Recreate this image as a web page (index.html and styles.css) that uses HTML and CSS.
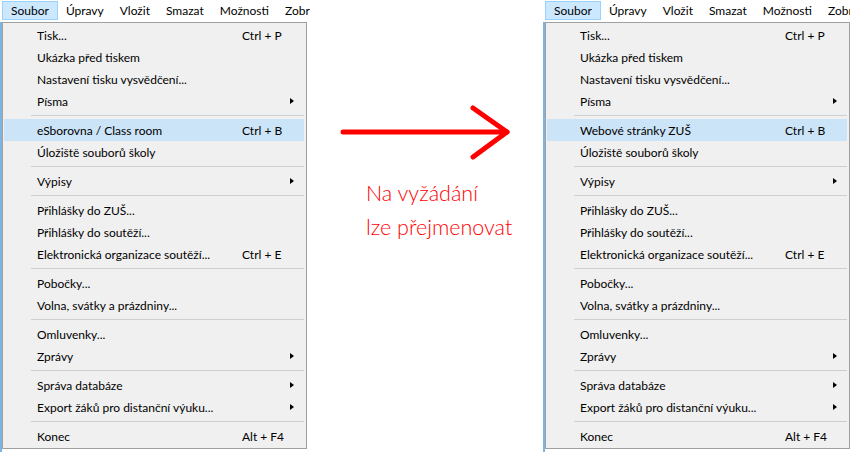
FILE: index.html
```html
<!DOCTYPE html>
<html lang="cs">
<head>
    <meta charset="UTF-8">
    <meta name="viewport" content="width=device-width, initial-scale=1.0">
    <title>Menu Soubor</title>
    <link rel="stylesheet" href="styles.css">
</head>
<body>
    <div class="page">
        <!-- Before -->
        <div class="panel">
            <div class="menubar">
                <span class="bar-item active">Soubor</span>
                <span class="bar-item">Úpravy</span>
                <span class="bar-item">Vložit</span>
                <span class="bar-item">Smazat</span>
                <span class="bar-item">Možnosti</span>
                <span class="bar-item">Zobrazit</span>
            </div>
            <div class="frame">
                <div class="dropdown">
                    <div class="item"><span class="label">Tisk...</span><span class="key">Ctrl + P</span><span class="sub"></span></div>
                    <div class="item"><span class="label">Ukázka před tiskem</span><span class="key"></span><span class="sub"></span></div>
                    <div class="item"><span class="label">Nastavení tisku vysvědčení...</span><span class="key"></span><span class="sub"></span></div>
                    <div class="item"><span class="label">Písma</span><span class="key"></span><span class="sub arrow"></span></div>
                    <div class="sep"></div>
                    <div class="item selected"><span class="label">eSborovna / Class room</span><span class="key">Ctrl + B</span><span class="sub"></span></div>
                    <div class="item"><span class="label">Úložiště souborů školy</span><span class="key"></span><span class="sub"></span></div>
                    <div class="sep"></div>
                    <div class="item"><span class="label">Výpisy</span><span class="key"></span><span class="sub arrow"></span></div>
                    <div class="sep"></div>
                    <div class="item"><span class="label">Přihlášky do ZUŠ...</span><span class="key"></span><span class="sub"></span></div>
                    <div class="item"><span class="label">Přihlášky do soutěží...</span><span class="key"></span><span class="sub"></span></div>
                    <div class="item"><span class="label">Elektronická organizace soutěží...</span><span class="key">Ctrl + E</span><span class="sub"></span></div>
                    <div class="sep"></div>
                    <div class="item"><span class="label">Pobočky...</span><span class="key"></span><span class="sub"></span></div>
                    <div class="item"><span class="label">Volna, svátky a prázdniny...</span><span class="key"></span><span class="sub"></span></div>
                    <div class="sep"></div>
                    <div class="item"><span class="label">Omluvenky...</span><span class="key"></span><span class="sub"></span></div>
                    <div class="item"><span class="label">Zprávy</span><span class="key"></span><span class="sub arrow"></span></div>
                    <div class="sep"></div>
                    <div class="item"><span class="label">Správa databáze</span><span class="key"></span><span class="sub arrow"></span></div>
                    <div class="item"><span class="label">Export žáků pro distanční výuku...</span><span class="key"></span><span class="sub arrow"></span></div>
                    <div class="sep"></div>
                    <div class="item"><span class="label">Konec</span><span class="key">Alt + F4</span><span class="sub"></span></div>
                </div>
            </div>
        </div>

        <!-- Arrow + note -->
        <div class="middle">
            <svg class="big-arrow" width="180" height="60" viewBox="0 0 180 60">
                <line x1="3" y1="30" x2="167" y2="30" stroke="#ff0000" stroke-width="5" stroke-linecap="round"/>
                <polyline points="133,6 167,30 133,55" fill="none" stroke="#ff0000" stroke-width="5" stroke-linecap="round" stroke-linejoin="round"/>
            </svg>
            <p class="note">Na vyžádání<br>lze přejmenovat</p>
        </div>

        <!-- After -->
        <div class="panel last">
            <div class="menubar">
                <span class="bar-item active">Soubor</span>
                <span class="bar-item">Úpravy</span>
                <span class="bar-item">Vložit</span>
                <span class="bar-item">Smazat</span>
                <span class="bar-item">Možnosti</span>
                <span class="bar-item">Zobrazit</span>
            </div>
            <div class="frame">
                <div class="dropdown">
                    <div class="item"><span class="label">Tisk...</span><span class="key">Ctrl + P</span><span class="sub"></span></div>
                    <div class="item"><span class="label">Ukázka před tiskem</span><span class="key"></span><span class="sub"></span></div>
                    <div class="item"><span class="label">Nastavení tisku vysvědčení...</span><span class="key"></span><span class="sub"></span></div>
                    <div class="item"><span class="label">Písma</span><span class="key"></span><span class="sub arrow"></span></div>
                    <div class="sep"></div>
                    <div class="item selected"><span class="label">Webové stránky ZUŠ</span><span class="key">Ctrl + B</span><span class="sub"></span></div>
                    <div class="item"><span class="label">Úložiště souborů školy</span><span class="key"></span><span class="sub"></span></div>
                    <div class="sep"></div>
                    <div class="item"><span class="label">Výpisy</span><span class="key"></span><span class="sub arrow"></span></div>
                    <div class="sep"></div>
                    <div class="item"><span class="label">Přihlášky do ZUŠ...</span><span class="key"></span><span class="sub"></span></div>
                    <div class="item"><span class="label">Přihlášky do soutěží...</span><span class="key"></span><span class="sub"></span></div>
                    <div class="item"><span class="label">Elektronická organizace soutěží...</span><span class="key">Ctrl + E</span><span class="sub"></span></div>
                    <div class="sep"></div>
                    <div class="item"><span class="label">Pobočky...</span><span class="key"></span><span class="sub"></span></div>
                    <div class="item"><span class="label">Volna, svátky a prázdniny...</span><span class="key"></span><span class="sub"></span></div>
                    <div class="sep"></div>
                    <div class="item"><span class="label">Omluvenky...</span><span class="key"></span><span class="sub"></span></div>
                    <div class="item"><span class="label">Zprávy</span><span class="key"></span><span class="sub arrow"></span></div>
                    <div class="sep"></div>
                    <div class="item"><span class="label">Správa databáze</span><span class="key"></span><span class="sub arrow"></span></div>
                    <div class="item"><span class="label">Export žáků pro distanční výuku...</span><span class="key"></span><span class="sub arrow"></span></div>
                    <div class="sep"></div>
                    <div class="item"><span class="label">Konec</span><span class="key">Alt + F4</span><span class="sub"></span></div>
                </div>
            </div>
        </div>
    </div>
</body>
</html>
```

FILE: styles.css
```css
body {
    margin: 0;
    background: #ffffff;
    font-family: "Lato", "Open Sans", sans-serif;
    color: #000;
    overflow: hidden;
}

.page {
    display: flex;
    width: 850px;
    height: 452px;
}

/* Menu window */
.panel {
    width: 310px;
    flex: 0 0 310px;
    overflow: hidden;
    background: #fff;
}

.menubar {
    display: flex;
    height: 22px;
    padding-left: 2px;
    white-space: nowrap;
    font-size: 12px;
}

.bar-item {
    padding: 0 7px;
    margin-top: 1px;
    height: 19px;
    line-height: 18px;
    border: 1px solid transparent;
    box-sizing: border-box;
}

.bar-item.active {
    padding: 0 8px;
    background: #cce8ff;
    border-color: #99d1ff;
}

.frame {
    border-left: 2px solid #7fb4e0;
    height: 430px;
}

.dropdown {
    width: 305px;
    box-sizing: border-box;
    border: 1px solid #a0a0a0;
    background: #f0f0f0;
    padding: 1px 0 1px;
    font-size: 12px;
}

.item {
    display: flex;
    align-items: center;
    height: 22px;
    margin: 0 2px 0 1px;
    padding-left: 33px;
    white-space: nowrap;
}

.item.selected {
    background: #cce4f7;
}

.label {
    flex: 1;
}

.key {
    width: 48px;
}

.sub {
    width: 14px;
    height: 22px;
    position: relative;
}

.sub.arrow::before {
    content: "";
    position: absolute;
    left: 0;
    top: 8px;
    border-left: 4px solid #000;
    border-top: 3.5px solid transparent;
    border-bottom: 3.5px solid transparent;
}

.sep {
    height: 7px;
    margin: 0 2px 0 28px;
    display: flex;
    align-items: center;
}

.sep::before {
    content: "";
    flex: 1;
    height: 1px;
    background: #cfcfcf;
}

/* Middle */
.middle {
    flex: 0 0 233px;
    padding: 102px 0 0 30px;
    box-sizing: border-box;
}

.big-arrow {
    display: block;
}

.note {
    margin: 14px 0 0 26px;
    color: #ff0000;
    font-size: 21.5px;
    font-weight: 300;
    line-height: 34px;
}
```
